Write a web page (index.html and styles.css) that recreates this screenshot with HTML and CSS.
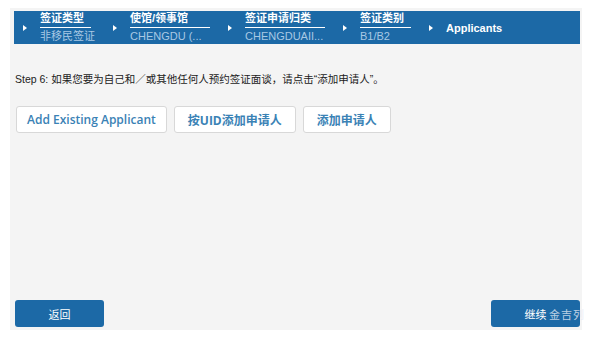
FILE: index.html
```html
<!DOCTYPE html>
<html>
<head>
  <title>Applicants</title>
  <link rel="stylesheet" href="styles.css">
</head>
<body>
  <div class="page">
    <div class="steps">
      <div class="step">
        <span class="arrow"></span>
        <div class="step-text">
          <div class="step-title">签证类型</div>
          <div class="step-value">非移民签证</div>
        </div>
      </div>
      <div class="step">
        <span class="arrow"></span>
        <div class="step-text">
          <div class="step-title wide">使馆/领事馆</div>
          <div class="step-value">CHENGDU (...</div>
        </div>
      </div>
      <div class="step">
        <span class="arrow"></span>
        <div class="step-text">
          <div class="step-title wide">签证申请归类</div>
          <div class="step-value">CHENGDUAII...</div>
        </div>
      </div>
      <div class="step">
        <span class="arrow"></span>
        <div class="step-text">
          <div class="step-title">签证类别</div>
          <div class="step-value">B1/B2</div>
        </div>
      </div>
      <div class="step current">
        <span class="arrow"></span>
        <div class="step-text">
          <div class="step-current">Applicants</div>
        </div>
      </div>
    </div>

    <p class="intro">Step 6: 如果您要为自己和／或其他任何人预约签证面谈，请点击“添加申请人”。</p>

    <div class="actions">
      <button class="btn-light">Add Existing Applicant</button>
      <button class="btn-light cjk">按UID添加申请人</button>
      <button class="btn-light cjk">添加申请人</button>
    </div>

    <div class="footer">
      <button class="btn-blue">返回</button>
      <div class="next-wrap">
        <button class="btn-blue">继续</button>
        <span class="watermark">金吉列</span>
      </div>
    </div>
  </div>
</body>
</html>
```

FILE: styles.css
```css
body {
  margin: 0;
  background: #ffffff;
  font-family: "Liberation Sans", "Noto Sans CJK SC", sans-serif;
}
.page {
  margin: 8px 12px 8px 10px;
  height: 322px;
  background: #f4f4f4;
  display: flex;
  flex-direction: column;
  padding: 3px 2px 0 4px;
  box-sizing: border-box;
}
.steps {
  background: #1c69a6;
  height: 33px;
  display: flex;
  align-items: center;
  padding-left: 9px;
}
.step {
  display: flex;
  align-items: center;
  margin-right: 18px;
}
.arrow {
  width: 0;
  height: 0;
  border-top: 3px solid transparent;
  border-bottom: 3px solid transparent;
  border-left: 4px solid #ffffff;
  margin-right: 13px;
}
.step-title {
  color: #ffffff;
  font-size: 11px;
  font-weight: bold;
  line-height: 13px;
  border-bottom: 1px solid #ffffff;
  padding-bottom: 2px;
  margin-bottom: 1px;
  width: 51px;
}
.step-title.wide {
  width: 80px;
}
.step-value {
  color: #a8c8e4;
  font-size: 11px;
  line-height: 14px;
}
.step-current {
  color: #ffffff;
  font-size: 11px;
  font-weight: bold;
}
.intro {
  margin: 28px 0 0 1px;
  font-size: 10.5px;
  color: #222222;
  line-height: 14px;
}
.actions {
  display: flex;
  gap: 7px;
  margin-top: 20px;
  margin-left: 2px;
}
.btn-light {
  background: #ffffff;
  border: 1px solid #d8d8d8;
  border-radius: 3px;
  height: 27px;
  padding: 0 10px;
  font-family: "Open Sans", "Noto Sans CJK SC", sans-serif;
  font-size: 12px;
  font-weight: 600;
  color: #3a82b5;
}
.btn-light.cjk {
  font-weight: bold;
  padding: 0 13px;
}
.footer {
  margin-top: auto;
  margin-bottom: 3px;
  display: flex;
  justify-content: space-between;
  align-items: flex-end;
  padding-left: 1px;
}
.btn-blue {
  width: 89px;
  height: 27px;
  background: #1c69a6;
  color: #ffffff;
  border: none;
  border-radius: 3px;
  font-family: "Noto Sans CJK SC", sans-serif;
  font-size: 11px;
}
.next-wrap {
  position: relative;
}
.watermark {
  position: absolute;
  left: 58px;
  top: 6px;
  white-space: nowrap;
  color: rgba(230, 235, 245, 0.8);
  font-family: "Noto Sans CJK SC", sans-serif;
  font-size: 11px;
  letter-spacing: 1px;
}
```
